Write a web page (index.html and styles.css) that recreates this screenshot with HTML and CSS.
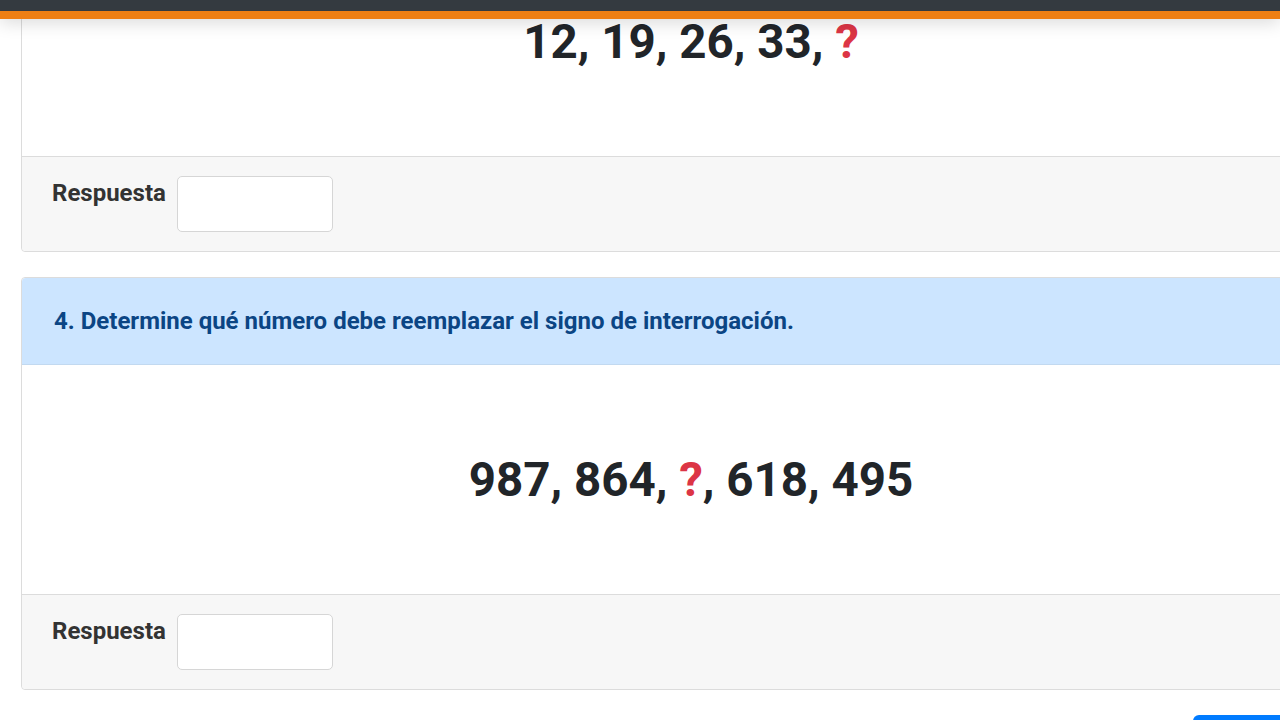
FILE: index.html
```html
<!DOCTYPE html>
<html lang="es">
  <head>
    <title>Series numéricas</title>
    <meta charset="UTF-8" />
    <meta name="viewport" content="width=device-width, initial-scale=1.0" />
    <link rel="stylesheet" href="styles.css">
  </head>
  <body>
    <header class="topbar"></header>

    <main class="container">
      <div class="card">
        <div class="card-header">3. Determine qué número debe reemplazar el signo de interrogación.</div>
        <div class="card-body">
          <p class="serie">12, 19, 26, 33, <span class="q">?</span></p>
        </div>
        <div class="card-footer">
          <label for="r3">Respuesta</label>
          <input type="text" id="r3" />
        </div>
      </div>

      <div class="card">
        <div class="card-header">4. Determine qué número debe reemplazar el signo de interrogación.</div>
        <div class="card-body">
          <p class="serie">987, 864, <span class="q">?</span>, 618, 495</p>
        </div>
        <div class="card-footer">
          <label for="r4">Respuesta</label>
          <input type="text" id="r4" />
        </div>
      </div>

      <div class="actions">
        <button type="submit">Enviar</button>
      </div>
    </main>
  </body>
</html>
```

FILE: styles.css
```css
html, body {
  overflow: hidden;
}
body {
  font-family: Roboto, "Liberation Sans", Arial, sans-serif;
  background-color: #fff;
  color: #212529;
  margin: 0;
}
.topbar {
  position: fixed;
  top: 0;
  left: 0;
  right: 0;
  height: 11px;
  background: #343a40;
  border-bottom: 8px solid #ee7f14;
  box-shadow: 0 3px 18px rgba(0, 0, 0, 0.16);
  z-index: 10;
}
.container {
  width: 1340px;
  margin: -161px 0 0 21px;
}
.card {
  border: 1px solid #dcdcdc;
  border-radius: 4px;
  margin-bottom: 25px;
  background: #fff;
}
.card-header {
  background: #cce5ff;
  color: #0b4584;
  font-weight: 700;
  font-size: 24px;
  padding: 0 32px;
  height: 86px;
  display: flex;
  align-items: center;
  border-bottom: 1px solid #c2d9f0;
  border-radius: 4px 4px 0 0;
}
.card-body {
  height: 229px;
  display: flex;
  align-items: center;
  justify-content: center;
  padding-top: 1px;
  box-sizing: border-box;
}
.serie {
  margin: 0;
  font-size: 47.5px;
  font-weight: 700;
}
.q {
  color: #dc3545;
}
.card-footer {
  background: #f7f7f7;
  border-top: 1px solid #dcdcdc;
  padding: 19px 30px 19px;
  display: flex;
  align-items: flex-start;
  gap: 11px;
  border-radius: 0 0 4px 4px;
}
label {
  font-weight: 700;
  font-size: 24px;
  color: #333;
  margin-top: 3px;
}
input[type='text'] {
  width: 156px;
  height: 56px;
  padding: 0 10px;
  box-sizing: border-box;
  border: 1px solid #d6d6d6;
  border-radius: 5px;
  background: #fff;
}
.actions {
  display: flex;
  justify-content: flex-end;
}
button {
  width: 168px;
  height: 50px;
  background-color: #007bff;
  color: white;
  border: none;
  border-radius: 6px;
  font-size: 20px;
  font-family: inherit;
  cursor: pointer;
}
```
